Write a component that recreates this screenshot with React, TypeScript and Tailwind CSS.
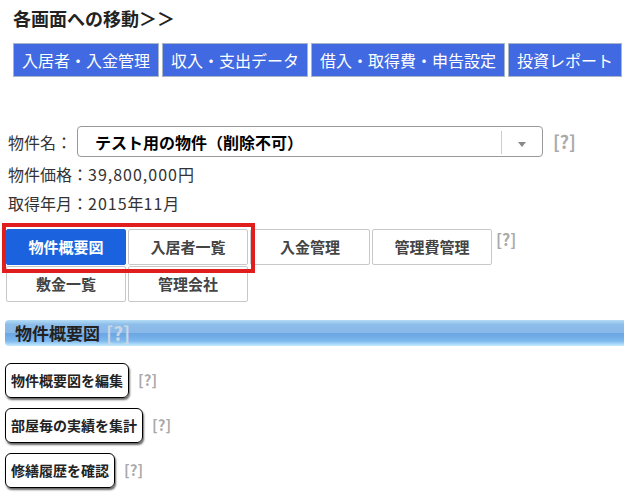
import React from "react"

const FONT = { fontFamily: '"Noto Sans CJK JP", "Noto Sans", sans-serif' }

const NAV = ["入居者・入金管理", "収入・支出データ", "借入・取得費・申告設定", "投資レポート"]
const TABS = ["物件概要図", "入居者一覧", "入金管理", "管理費管理", "敷金一覧", "管理会社"]
const ACTIONS = ["物件概要図を編集", "部屋毎の実績を集計", "修繕履歴を確認"]

function Help({ className = "" }: { className?: string }) {
    return <span className={`font-bold text-[#aaaaaa] ${className}`}>[?]</span>
}

export default function App() {
    return (
        <div className="w-[624px] h-[499px] bg-white overflow-hidden text-[#333]" style={FONT}>
            <h1 className="pl-[13px] pt-[6px] text-[18px] leading-[24px] font-bold text-[#222]">
                各画面への移動＞＞
            </h1>

            <div className="flex gap-[3px] ml-[13px] mt-[13px]">
                {NAV.map((label) => (
                    <div
                        key={label}
                        className="h-[34px] px-[8px] flex items-center bg-[#4169e1] border border-[#a9b6c8] text-white text-[16px] whitespace-nowrap"
                    >
                        {label}
                    </div>
                ))}
            </div>

            {/* property select */}
            <div className="flex items-center pl-[8px] mt-[49px]">
                <span className="text-[16px] w-[64px]">物件名：</span>
                <div className="ml-[5px] w-[466px] h-[31px] border border-[#999] rounded-[4px] flex items-center">
                    <span className="flex-1 pl-[17px] text-[16px] font-bold text-black">テスト用の物件（削除不可）</span>
                    <div className="self-stretch mt-[4px] mb-[2px] border-l border-[#ccc]" />
                    <div className="w-[40px] flex justify-center pt-[6px]">
                        <div className="w-0 h-0 border-l-[4px] border-r-[4px] border-t-[5px] border-l-transparent border-r-transparent border-t-[#888]" />
                    </div>
                </div>
                <Help className="ml-[10px] text-[18px]" />
            </div>

            <div className="pl-[8px] mt-[3px] text-[16px] leading-[29px]">
                <p>物件価格：<span className="tracking-[1px]">39,800,000</span>円</p>
                <p>取得年月：<span className="tracking-[1px]">2015</span>年<span className="tracking-[1px]">11</span>月</p>
            </div>

            {/* tabs */}
            <div className="relative ml-[6px] mt-[11px] flex items-start">
                <div className="grid grid-cols-[repeat(4,120px)] gap-x-[2px] gap-y-[1px]">
                    {TABS.map((t, i) => (
                        <div
                            key={t}
                            className={
                                i === 0
                                    ? "h-[36px] flex items-center justify-center rounded-[2px] bg-[#1b62de] border border-[#1b62de] text-white font-bold text-[15px]"
                                    : "h-[36px] flex items-center justify-center rounded-[2px] bg-white border border-[#c8c8c8] text-[#444] font-bold text-[15px]"
                            }
                        >
                            {t}
                        </div>
                    ))}
                </div>
                <Help className="ml-[4px] mt-[0px] text-[16px] leading-[20px]" />
                <div className="absolute left-[-4px] top-[-6px] w-[253px] h-[50px] border-[4px] border-[#e01e1e]" />
            </div>

            {/* section header */}
            <div
                className="ml-[5px] mt-[18px] h-[26px] rounded-l-[4px] flex items-center pl-[10px]"
                style={{
                    background:
                        "linear-gradient(to bottom, #b4dcf4 0%, #8cbce9 18%, #8ab9e9 48%, #6ba5e3 52%, #7cb7ee 80%, #c6ecff 100%)",
                }}
            >
                <span className="text-[17px] font-bold text-[#222]">物件概要図</span>
                <span className="ml-[6px] text-[19px] font-bold text-[#c9d6e3]">[?]</span>
            </div>

            {/* actions */}
            <div className="ml-[5px] mt-[17px] flex flex-col gap-[10px]">
                {ACTIONS.map((a) => (
                    <div key={a} className="flex items-center">
                        <div className="h-[35px] px-[5px] flex items-center border border-black rounded-[6px] shadow-[1px_2px_2px_rgba(0,0,0,0.6)] text-[14px] font-bold text-[#222] whitespace-nowrap">
                            {a}
                        </div>
                        <Help className="ml-[9px] text-[15px]" />
                    </div>
                ))}
            </div>
        </div>
    )
}
